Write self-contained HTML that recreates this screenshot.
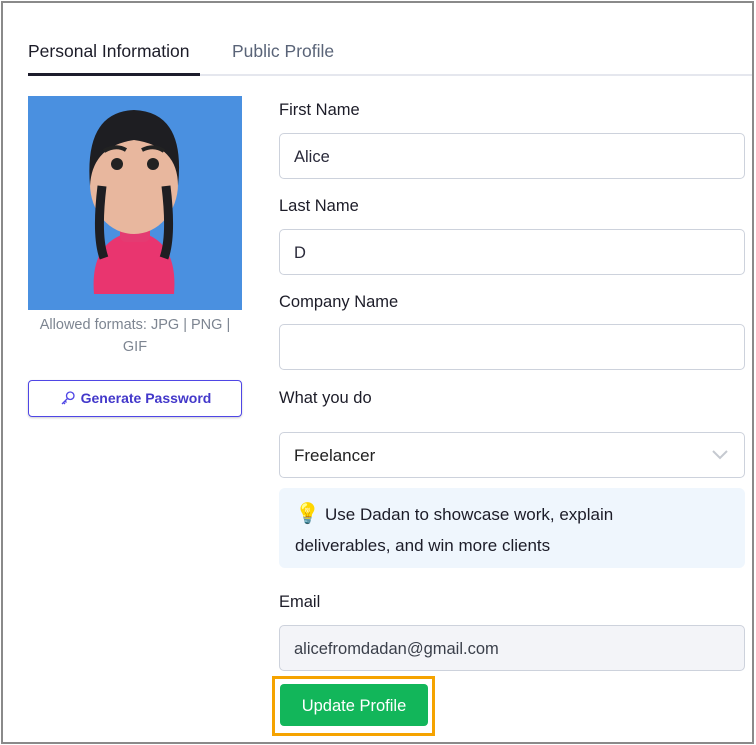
<!DOCTYPE html>
<html><head><style>
*{box-sizing:border-box;margin:0;padding:0}
body{width:756px;height:745px;background:#fff;font-family:"Liberation Sans",sans-serif;position:relative;overflow:hidden;color:#1f1f2e}
.frame{position:absolute;left:1px;top:1px;width:753px;height:743px;border:2px solid #8a8a8a}
.abs{position:absolute}
.lbl{position:absolute;left:279px;font-size:16.5px;color:#1c1c28}
.inp{position:absolute;left:279px;width:466px;height:46px;border:1px solid #cdd2dc;border-radius:5px;font-size:16.5px;padding-left:14px;line-height:46px;color:#2a2a3a}
</style></head><body>
<div class="frame"></div>
<div class="abs" style="left:28px;top:41px;font-size:17.5px;color:#1c1c28">Personal Information</div>
<div class="abs" style="left:232px;top:41px;font-size:17.5px;color:#5a6478">Public Profile</div>
<div class="abs" style="left:28px;top:74px;width:724px;height:2px;background:#e5e7ee"></div>
<div class="abs" style="left:28px;top:73px;width:172px;height:3px;background:#1c1c2c"></div>

<svg class="abs" style="left:28px;top:96px" width="214" height="214" viewBox="0 0 214 214">
<rect width="214" height="214" fill="#4a90e0"/>
<path d="M66 198 Q62 150 96 138 L118 138 Q150 150 146 198 Z" fill="#e9356f"/>
<rect x="92" y="112" width="30" height="34" rx="6" fill="#e43b72"/>
<ellipse cx="106" cy="88" rx="44" ry="50" fill="#e8b79e"/>
<path d="M62 90 Q56 16 106 14 Q158 16 150 90 Q150 50 106 44 Q64 50 62 90Z" fill="#1e1e22"/>
<path d="M74 90 Q68 140 76 162" stroke="#1e1e22" stroke-width="9" fill="none"/>
<path d="M138 90 Q144 140 136 162" stroke="#1e1e22" stroke-width="9" fill="none"/>
<ellipse cx="89" cy="68" rx="6" ry="6" fill="#222"/><ellipse cx="125" cy="68" rx="6" ry="6" fill="#222"/>
<path d="M76 55 Q88 48 98 54 M114 54 Q126 48 136 55" stroke="#222" stroke-width="4" fill="none"/>
</svg>
<div class="abs" style="left:28px;top:314px;width:214px;padding:0 4px;text-align:center;font-size:14.5px;color:#7d8591;line-height:22px">Allowed formats: JPG | PNG | GIF</div>
<div class="abs" style="left:28px;top:380px;width:214px;height:37px;border:1px solid #4f46e5;border-radius:4px;color:#4338ca;font-weight:bold;font-size:14px;line-height:35px;text-align:center;box-shadow:0 1px 2px rgba(0,0,0,.2)">
<svg width="18" height="18" viewBox="0 0 24 24" style="vertical-align:-4px;margin-right:4px" fill="none" stroke="#4f46e5" stroke-width="1.8"><circle cx="15" cy="9" r="5"/><path d="M11 13 L4 20 M6 18 L8 20 M8 16 L10 18"/></svg>Generate Password</div>

<div class="lbl" style="top:101px">First Name</div>
<div class="inp" style="top:133px">Alice</div>
<div class="lbl" style="top:197px">Last Name</div>
<div class="inp" style="top:229px">D</div>
<div class="lbl" style="top:293px">Company Name</div>
<div class="inp" style="top:324px"></div>
<div class="lbl" style="top:389px">What you do</div>
<div class="inp" style="top:432px;font-size:17px;color:#222">Freelancer<svg class="abs" style="right:16px;top:17px" width="16" height="10" viewBox="0 0 16 10"><path d="M1 1 L8 8 L15 1" stroke="#c5c9d0" stroke-width="2" fill="none"/></svg></div>
<div class="abs" style="left:279px;top:488px;width:466px;height:80px;background:#eff6fd;border-radius:6px;font-size:17px;color:#1c1c28;line-height:31px;padding:11px 0 0 16px">
<span style="display:inline-block;width:30px;color:#f5b800;font-size:20px">💡</span>Use Dadan to showcase work, explain<br>deliverables, and win more clients</div>
<div class="lbl" style="top:593px">Email</div>
<div class="inp" style="top:625px;background:#f3f4f8;color:#3a3f4a">alicefromdadan@gmail.com</div>
<div class="abs" style="left:272px;top:676px;width:163px;height:60px;border:3px solid #f5a300"></div>
<div class="abs" style="left:280px;top:684px;width:148px;height:42px;background:#12b65a;border-radius:4px;color:#fff;font-size:16.5px;text-align:center;line-height:44px">Update Profile</div>
</body></html>
